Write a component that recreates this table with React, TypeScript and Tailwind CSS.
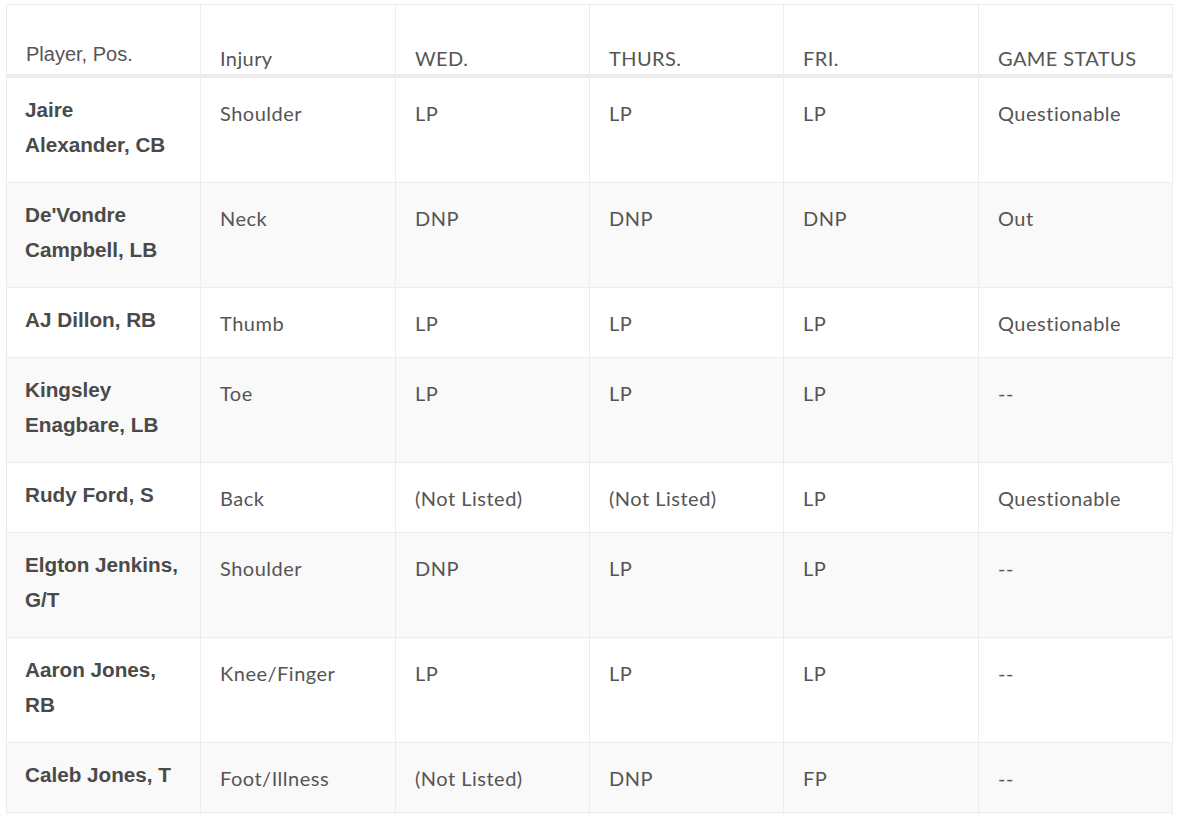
const rows = [
  { name: 'Jaire Alexander, CB', injury: 'Shoulder', wed: 'LP', thu: 'LP', fri: 'LP', status: 'Questionable' },
  { name: "De'Vondre Campbell, LB", injury: 'Neck', wed: 'DNP', thu: 'DNP', fri: 'DNP', status: 'Out' },
  { name: 'AJ Dillon, RB', injury: 'Thumb', wed: 'LP', thu: 'LP', fri: 'LP', status: 'Questionable' },
  { name: 'Kingsley Enagbare, LB', injury: 'Toe', wed: 'LP', thu: 'LP', fri: 'LP', status: '--' },
  { name: 'Rudy Ford, S', injury: 'Back', wed: '(Not Listed)', thu: '(Not Listed)', fri: 'LP', status: 'Questionable' },
  { name: 'Elgton Jenkins, G/T', injury: 'Shoulder', wed: 'DNP', thu: 'LP', fri: 'LP', status: '--' },
  { name: 'Aaron Jones, RB', injury: 'Knee/Finger', wed: 'LP', thu: 'LP', fri: 'LP', status: '--' },
  { name: 'Caleb Jones, T', injury: 'Foot/Illness', wed: '(Not Listed)', thu: 'DNP', fri: 'FP', status: '--' },
  { name: '\u00a0', injury: '\u00a0', wed: '\u00a0', thu: '\u00a0', fri: '\u00a0', status: '\u00a0' },
];

const cell = 'border border-[#ececec] align-top px-[19px] pt-[19px] pb-[17px] text-[20px] tracking-[0.5px] leading-[33px] text-[#555] font-["Lato",sans-serif]';
const head = 'border-x border-[#ececec] align-bottom px-[19px] pb-[3px] text-[20px] tracking-[0.4px] leading-[26px] text-[#555] font-normal text-left font-["Lato",sans-serif]';

const App = () => {
  return (
    <div className="bg-white min-h-screen pt-[4px] pl-[6px]">
      <table className="border-collapse w-[1167px] table-fixed">
        <colgroup>
          <col className="w-[194px]" />
          <col className="w-[195px]" />
          <col className="w-[194px]" />
          <col className="w-[194px]" />
          <col className="w-[195px]" />
          <col className="w-[194px]" />
        </colgroup>
        <thead>
          <tr className="h-[71px] border-t border-[#ececec] border-b-4 border-b-[#ececec]">
            <th className={`${head} pb-[7px] text-[19.5px] tracking-normal font-["Liberation_Sans",Arial,sans-serif]`}>Player, Pos.</th>
            <th className={head}>Injury</th>
            <th className={head}>WED.</th>
            <th className={head}>THURS.</th>
            <th className={head}>FRI.</th>
            <th className={head}>GAME STATUS</th>
          </tr>
        </thead>
        <tbody>
          {rows.map((r, i) => (
            <tr key={i} className={i % 2 === 1 ? 'bg-[#f9f9f9]' : 'bg-white'}>
              <td className='border border-[#ececec] align-top pl-[18px] pr-[19px] pt-[14px] pb-[20px] text-[20.7px] leading-[35px] font-bold text-[#4a4a4a] font-["Liberation_Sans",Arial,sans-serif]'>
                {r.name}
              </td>
              <td className={cell}>{r.injury}</td>
              <td className={cell}>{r.wed}</td>
              <td className={cell}>{r.thu}</td>
              <td className={cell}>{r.fri}</td>
              <td className={cell}>{r.status}</td>
            </tr>
          ))}
        </tbody>
      </table>
    </div>
  );
};

export default App;
